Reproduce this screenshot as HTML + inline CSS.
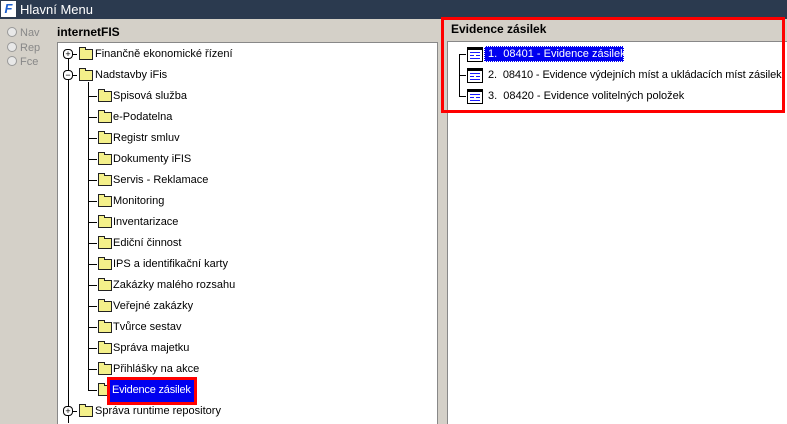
<!DOCTYPE html><html><head><meta charset="utf-8"><style>
body{margin:0;width:787px;height:423px;overflow:hidden;background:#d4d0c8;font-family:"Liberation Sans",sans-serif;font-size:11px;position:relative}
.a{position:absolute}
.t{position:absolute;white-space:nowrap;color:#000;font-size:11px;line-height:13px}
.f{position:absolute;width:12px;height:9px;background:#f4f08a;border:1px solid #222;}
.f:before{content:"";position:absolute;left:-1px;top:-3px;width:5px;height:2px;background:#f4f08a;border:1px solid #222;border-bottom:none}
.hl{position:absolute;height:1px;background:#000}
.vl{position:absolute;width:1px;background:#000}
.pb{position:absolute;width:8px;height:8px;border:1px solid #000;border-radius:4px;background:#fff;font-size:9px;line-height:8px;text-align:center}
.ic{position:absolute;width:14px;height:11px;border:1px solid #000;border-top:3px solid #000;background:#fff}
.ic:after{content:"";position:absolute;left:2px;top:2px;width:10px;height:5px;border-top:1px solid #1a1aff;border-bottom:1px solid #1a1aff;background:linear-gradient(90deg,#1a1aff 0 4px,transparent 4px 6px,#1a1aff 6px 10px);background-size:10px 1px;background-repeat:no-repeat;background-position:0 2px}
.r{position:absolute;color:#888;font-size:11px}
.rc{display:inline-block;width:8px;height:8px;border:1px solid #999;border-radius:5px;background:#e8e8e8;vertical-align:-1px;margin-right:3px}
</style></head><body>
<div class="a" style="left:0;top:0;width:787px;height:19px;background:#2b3a4f"></div>
<div class="a" style="left:1px;top:1px;width:15px;height:16px;background:#fff;color:#1b5fd0;font-weight:bold;font-style:italic;font-size:13px;line-height:16px;text-align:center">F</div>
<div class="t" style="left:20px;top:2px;color:#fff;font-size:13px;line-height:15px">Hlavní Menu</div>
<div class="r" style="left:7px;top:27px"><span class="rc"></span>Nav</div>
<div class="r" style="left:7px;top:42px"><span class="rc"></span>Rep</div>
<div class="r" style="left:7px;top:56px"><span class="rc"></span>Fce</div>
<div class="t" style="left:57px;top:26px;font-weight:bold;font-size:12px">internetFIS</div>
<div class="a" style="left:57px;top:42px;width:379px;height:381px;background:#fff;border-left:1px solid #888;border-top:1px solid #888;border-right:1px solid #888"></div>
<div class="a" style="left:438px;top:19px;width:349px;height:404px;background:#d4d0c8"></div>
<div class="a" style="left:447px;top:41px;width:340px;height:382px;background:#fff;border-left:1px solid #888;border-top:1px solid #888"></div>
<div class="t" style="left:451px;top:23px;font-weight:bold;font-size:12px">Evidence zásilek</div>
<div class="a" style="left:441px;top:17px;width:338px;height:90px;border:3px solid #f00"></div>

<div class="vl" style="left:68px;top:59px;height:364px"></div>
<div class="vl" style="left:88px;top:82px;height:309px"></div>
<div class="pb" style="left:63px;top:49px">+</div>
<div class="hl" style="left:73px;top:54px;width:4px"></div>
<div class="f" style="left:79px;top:49px"></div><div class="t" style="left:95px;top:48px">Finančně ekonomické řízení</div>
<div class="pb" style="left:63px;top:70px">−</div>
<div class="hl" style="left:73px;top:75px;width:4px"></div>
<div class="f" style="left:79px;top:70px"></div><div class="t" style="left:95px;top:69px">Nadstavby iFis</div>

<div id="rows"></div>
<div class="pb" style="left:63px;top:406px">+</div>
<div class="hl" style="left:73px;top:411px;width:4px"></div>
<div class="f" style="left:79px;top:406px"></div><div class="t" style="left:95px;top:405px">Správa runtime repository</div>

<script>
var n=["Spisová služba","e-Podatelna","Registr smluv","Dokumenty iFIS","Servis - Reklamace","Monitoring","Inventarizace","Ediční činnost","IPS a identifikační karty","Zakázky malého rozsahu","Veřejné zakázky","Tvůrce sestav","Správa majetku","Přihlášky na akce"];
var h="";n.forEach(function(s,i){var y=96+i*21;h+='<div class="hl" style="left:88px;top:'+y+'px;width:9px"></div><div class="f" style="left:98px;top:'+(y-5)+'px"></div><div class="t" style="left:113px;top:'+(y-6)+'px">'+s+'</div>';});
var y=390;h+='<div class="hl" style="left:88px;top:'+y+'px;width:9px"></div><div class="f" style="left:98px;top:'+(y-5)+'px"></div>';
document.getElementById("rows").innerHTML=h;
</script>
<div class="a" style="left:107px;top:377px;width:84px;height:22px;border:3px solid #f00;background:#0000f0"></div>
<div class="t" style="left:112px;top:384px;color:#fff;letter-spacing:-0.2px">Evidence zásilek</div>

<div class="vl" style="left:459px;top:54px;height:42px"></div>
<div class="hl" style="left:459px;top:54px;width:7px"></div>
<div class="hl" style="left:459px;top:75px;width:7px"></div>
<div class="hl" style="left:459px;top:96px;width:7px"></div>
<div class="ic" style="left:467px;top:47px"></div>
<div class="ic" style="left:467px;top:68px"></div>
<div class="ic" style="left:467px;top:89px"></div>
<div class="a" style="left:484px;top:46px;width:140px;height:16px;background:#0000f0;outline:1px dotted #fff;outline-offset:-1px"></div>
<div class="t" style="left:488px;top:48px;color:#fff">1.&nbsp; 08401 - Evidence zásilek</div>
<div class="t" style="left:488px;top:69px;letter-spacing:-0.1px">2.&nbsp; 08410 - Evidence výdejních míst a ukládacích míst zásilek</div>
<div class="t" style="left:488px;top:90px">3.&nbsp; 08420 - Evidence volitelných položek</div>
</body></html>
